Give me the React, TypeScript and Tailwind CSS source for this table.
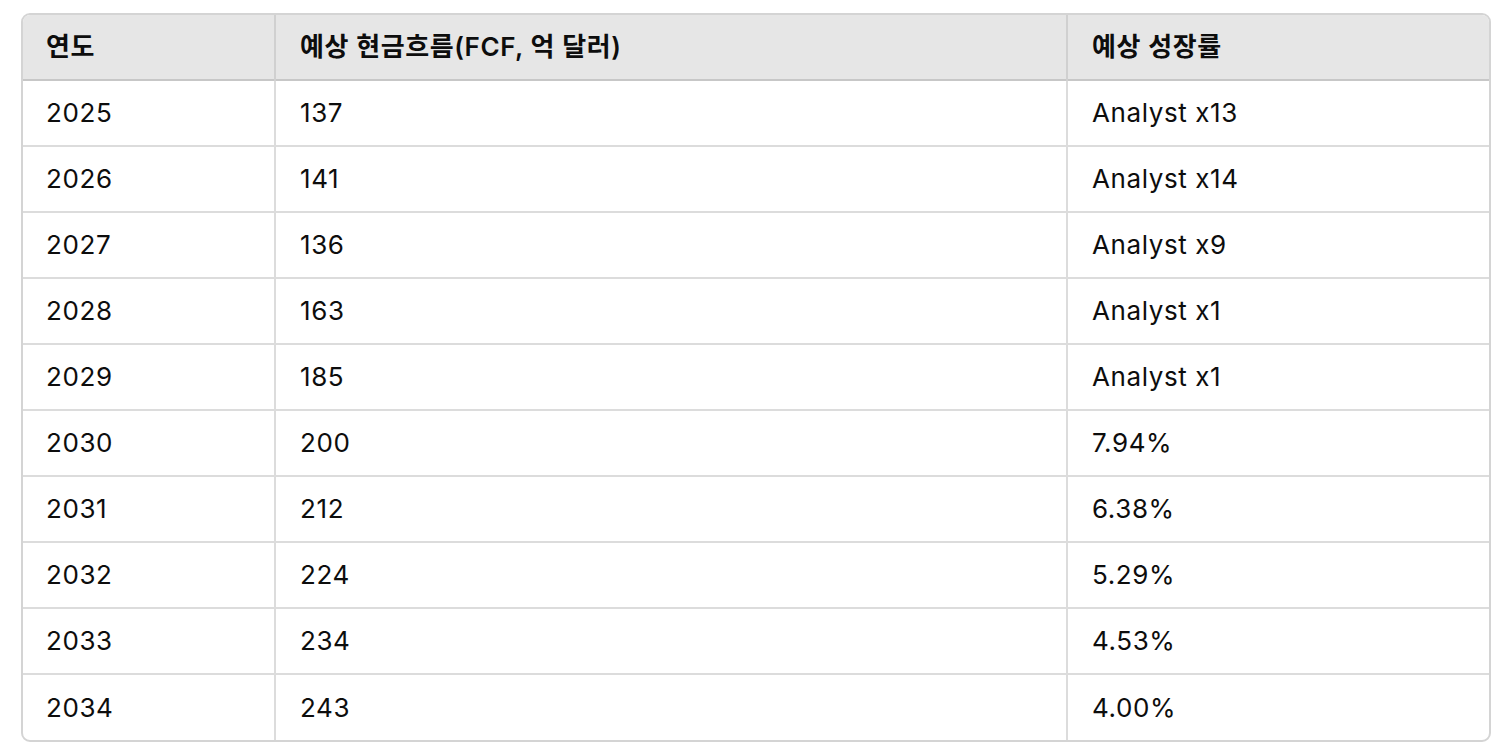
import React from 'react';

const rows = [
    ['2025', '137', 'Analyst x13'],
    ['2026', '141', 'Analyst x14'],
    ['2027', '136', 'Analyst x9'],
    ['2028', '163', 'Analyst x1'],
    ['2029', '185', 'Analyst x1'],
    ['2030', '200', '7.94%'],
    ['2031', '212', '6.38%'],
    ['2032', '224', '5.29%'],
    ['2033', '234', '4.53%'],
    ['2034', '243', '4.00%'],
];

export default function App() {
    return (
        <div className="min-h-screen bg-white pt-[13px] pl-[21px] pr-[11px] font-['Inter','Noto_Sans_CJK_KR',sans-serif] text-[#0d0d0d]">
            <div className="w-[1470px] overflow-hidden rounded-[9px] border-2 border-[#d4d4d4]">
                <table className="w-full border-collapse text-left text-[26px] leading-none tracking-[0.6px]">
                    <colgroup>
                        <col className="w-[252px]" />
                        <col className="w-[792px]" />
                        <col />
                    </colgroup>
                    <thead>
                        <tr className="h-[65px] bg-[#e6e6e6] border-b-2 border-[#c7c7c7]">
                            <th className="pl-[23px] pr-6 font-semibold">연도</th>
                            <th className="pl-[24px] pr-6 font-semibold border-l-2 border-[#d0d0d0]">예상 현금흐름(FCF, 억 달러)</th>
                            <th className="pl-[24px] pr-6 font-semibold border-l-2 border-[#d0d0d0]">예상 성장률</th>
                        </tr>
                    </thead>
                    <tbody>
                        {rows.map((r, i) => (
                            <tr key={r[0]} className={`h-[66px] ${i < rows.length - 1 ? 'border-b-2 border-[#dcdcdc]' : ''}`}>
                                <td className="pl-[23px] pr-6 font-normal">{r[0]}</td>
                                <td className="pl-[24px] pr-6 border-l-2 border-[#dcdcdc]">{r[1]}</td>
                                <td className="pl-[24px] pr-6 border-l-2 border-[#dcdcdc]">{r[2]}</td>
                            </tr>
                        ))}
                    </tbody>
                </table>
            </div>
        </div>
    );
}
